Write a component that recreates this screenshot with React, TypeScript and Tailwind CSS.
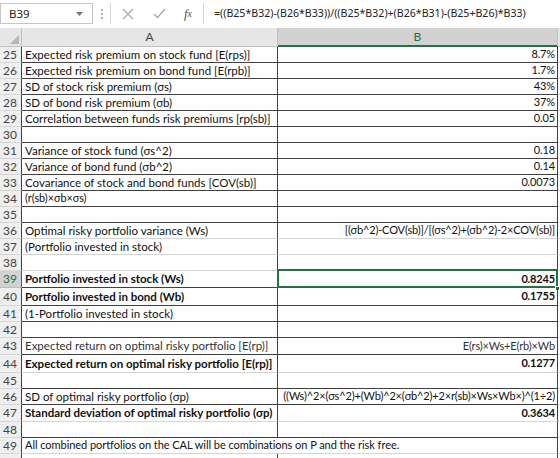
import React from "react";

type R = {
  n: number;
  a?: string;
  b?: string;
  h?: number;
  bold?: boolean;
  light?: boolean;
  bb?: string; // bottom border color
  span?: boolean;
  sel?: boolean;
  small?: boolean;
  hideNum?: boolean;
};

const D = "#404040";
const L = "#d4d4d4";

const rows: R[] = [
  { n: 25, a: "Expected risk premium on stock fund [E(rps)]", b: "8.7%" },
  { n: 26, a: "Expected risk premium on bond fund [E(rpb)]", b: "1.7%" },
  { n: 27, a: "SD of stock risk premium (σs)", b: "43%" },
  { n: 28, a: "SD of bond risk premium (σb)", b: "37%" },
  { n: 29, a: "Correlation between funds risk premiums [rp(sb)]", b: "0.05" },
  { n: 30 },
  { n: 31, a: "Variance of stock fund (σs^2)", b: "0.18" },
  { n: 32, a: "Variance of bond fund (σb^2)", b: "0.14" },
  { n: 33, a: "Covariance of stock and bond funds [COV(sb)]", b: "0.0073" },
  { n: 34, a: "(r(sb)×σb×σs)", small: true },
  { n: 35 },
  { n: 36, a: "Optimal risky portfolio variance (Ws)", b: "[(σb^2)-COV(sb)]/[(σs^2)+(σb^2)-2×COV(sb)]", bb: L },
  { n: 37, a: "(Portfolio invested in stock)", bb: L },
  { n: 38, bb: L },
  { n: 39, a: "Portfolio invested in stock (Ws)", b: "0.8245", bold: true, h: 17, sel: true },
  { n: 40, a: "Portfolio invested in bond (Wb)", b: "0.1755", bold: true, h: 18 },
  { n: 41, a: "(1-Portfolio invested in stock)" },
  { n: 42 },
  { n: 43, a: "Expected return on optimal risky portfolio [E(rp)]", b: "E(rs)×Ws+E(rb)×Wb", h: 17, light: true },
  { n: 44, a: "Expected return on optimal risky portfolio [E(rp)]", b: "0.1277", bold: true, h: 18, bb: L },
  { n: 45 },
  { n: 46, a: "SD of optimal risky portfolio (σp)", b: "((Ws)^2×(σs^2)+(Wb)^2×(σb^2)+2×r(sb)×Ws×Wb×)^(1÷2)" },
  { n: 47, a: "Standard deviation of optimal risky portfolio (σp)", b: "0.3634", bold: true, h: 17, bb: L },
  { n: 48 },
  { n: 49, a: "All combined portfolios on the CAL will be combinations on P and the risk free.", span: true, bb: L },
  { n: 50, bb: L, hideNum: true },
];

const cellFont = { fontFamily: "Lato, 'Noto Sans', sans-serif" };

function Row({ r }: { r: R }) {
  const h = r.h ?? 16;
  const bb = r.bb ?? D;
  const txt = r.light ? "text-[#333]" : "text-[#111]";
  const weight = r.bold ? "font-bold" : "font-normal";
  const aSize = r.bold ? "text-[11.5px]" : r.small ? "text-[10.8px]" : "text-[11.5px]";
  return (
    <div className="flex w-[560px]" style={{ height: h }}>
      <div
        className={`w-[22px] shrink-0 flex items-center pl-[3px] text-[12px] border-b border-r ${
          r.sel ? "bg-[#d2d2d2] text-[#217346] border-r-[#217346] border-b-[#bdbdbd]" : "bg-[#efefef] text-[#444] border-b-[#d6d6d6] border-r-[#404040]"
        }`}
        style={cellFont}
      >
        {r.hideNum ? null : r.n}
      </div>
      {r.span ? (
        <div
          className={`w-[536px] shrink-0 flex items-center pl-[3px] whitespace-nowrap overflow-hidden text-[11px] tracking-[-0.05px] border-r border-r-[#404040] ${txt}`}
          style={{ ...cellFont, borderBottom: `1px solid ${bb}` }}
        >
          {r.a}
        </div>
      ) : (
        <>
          <div
            className={`w-[256px] shrink-0 flex items-center pl-[3px] whitespace-nowrap overflow-hidden border-r border-r-[#404040] ${aSize} ${weight} ${txt}`}
            style={{ ...cellFont, borderBottom: `1px solid ${bb}` }}
          >
            {r.a}
          </div>
          <div
            className={`relative w-[280px] shrink-0 flex items-center justify-end pr-[2px] whitespace-nowrap text-[11px] tracking-[-0.15px] border-r border-r-[#404040] ${weight} ${txt}`}
            style={{ ...cellFont, borderBottom: `1px solid ${bb}` }}
          >
            {r.b}
            {r.sel && (
              <>
                <div className="absolute left-[-1px] right-[-1px] top-[-2px] bottom-[-1px] border-2 border-[#217346] pointer-events-none" />
                <div className="absolute right-[-3px] bottom-[-4px] w-[5px] h-[5px] bg-[#217346] border border-white" />
              </>
            )}
          </div>
        </>
      )}
      <div className="flex-1 bg-white" style={{ borderBottom: `1px solid ${L}` }} />
    </div>
  );
}

export default function App() {
  return (
    <div className="w-[560px] h-[458px] overflow-hidden bg-white select-none">
      {/* formula bar */}
      <div className="flex h-[28px] w-[560px] bg-white items-start pt-[3px]" style={{ fontFamily: "'Noto Sans', 'Open Sans', sans-serif" }}>
        <div className="w-[93px] h-[21px] border border-[#c6c6c6] bg-white flex items-center justify-between pl-[8px] pr-[9px] text-[11.5px] text-[#222]">
          <span>B39</span>
          <svg width="7" height="4" viewBox="0 0 7 4">
            <path d="M0 0 L7 0 L3.5 4 Z" fill="#777" />
          </svg>
        </div>
        <div className="w-[17px] h-[21px] flex flex-col items-center justify-center gap-[2px]">
          <div className="w-[2px] h-[2px] bg-[#b0b0b0]" />
          <div className="w-[2px] h-[2px] bg-[#b0b0b0]" />
          <div className="w-[2px] h-[2px] bg-[#b0b0b0]" />
        </div>
        <div className="w-[93px] h-[21px] border-l border-[#d4d4d4] flex items-center">
          <div className="w-[34px] flex justify-center">
            <svg width="12" height="12" viewBox="0 0 12 12">
              <path d="M1 1 L11 11 M11 1 L1 11" stroke="#a6a6a6" strokeWidth="1.2" />
            </svg>
          </div>
          <div className="w-[28px] flex justify-center">
            <svg width="13" height="11" viewBox="0 0 13 11">
              <path d="M1 6 L4.5 9.5 L12 1" stroke="#a6a6a6" strokeWidth="1.2" fill="none" />
            </svg>
          </div>
          <div className="w-[30px] flex justify-center text-[13px] text-[#555] italic" style={{ fontFamily: "'Liberation Serif', serif" }}>
            f<span className="text-[10px] relative top-[2px]">x</span>
          </div>
        </div>
        <div className="flex-1 h-[21px] border-l border-[#d4d4d4] flex items-center pl-[10px] text-[10.6px] text-[#222] whitespace-nowrap overflow-hidden">
          =((B25*B32)-(B26*B33))/((B25*B32)+(B26*B31)-(B25+B26)*B33)
        </div>
      </div>
      {/* column header */}
      <div className="flex h-[19px] w-[560px]" style={cellFont}>
        <div className="relative w-[22px] shrink-0 bg-[#e6e6e6] border-r border-b border-[#c0c0c0]">
          <svg className="absolute right-[2px] bottom-[2px]" width="9" height="9" viewBox="0 0 9 9">
            <path d="M9 0 L9 9 L0 9 Z" fill="#b8b8b8" />
          </svg>
        </div>
        <div className="w-[256px] shrink-0 bg-[#e6e6e6] border-r border-b border-[#c0c0c0] flex items-center justify-center text-[12px] text-[#444]">
          A
        </div>
        <div className="w-[280px] shrink-0 bg-[#d2d2d2] border-r border-[#c0c0c0] border-b-2 border-b-[#217346] flex items-center justify-center text-[12px] text-[#217346]">
          B
        </div>
        <div className="flex-1 bg-[#e6e6e6] border-b border-[#c0c0c0]" />
      </div>
      {rows.map((r) => (
        <Row key={r.n} r={r} />
      ))}
    </div>
  );
}
